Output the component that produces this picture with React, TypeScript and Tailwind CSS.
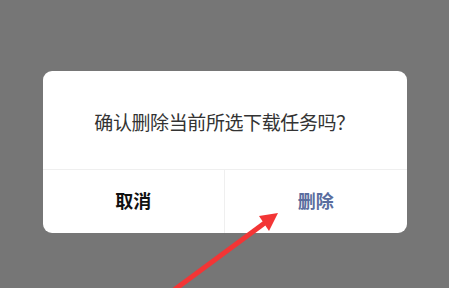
import { FC, ReactElement } from 'react';

const font = { fontFamily: '"Noto Sans CJK SC", "Noto Sans", sans-serif' };

const App: FC = (): ReactElement => {
  return (
    <div className="relative h-[288px] w-full overflow-hidden bg-[#767676]" style={font}>
      <div className="mx-auto flex w-[364px] flex-col pt-[71px]">
        <div className="overflow-hidden rounded-[9px] bg-white">
          <div className="flex h-[98px] items-center justify-center pt-[4px] text-[19px] tracking-[-0.4px] text-[#333333]">
            确认删除当前所选下载任务吗？
          </div>
          <div className="flex h-[64px] border-t border-[#efefef]">
            <div className="flex flex-1 items-center justify-center pb-[2px] text-[18px] font-bold text-[#111111]">
              取消
            </div>
            <div className="flex flex-1 items-center justify-center border-l border-[#efefef] pb-[2px] text-[18px] font-bold text-[#5a6d9e]">
              删除
            </div>
          </div>
        </div>
      </div>
      <svg className="absolute left-0 top-0" width="449" height="288" viewBox="0 0 449 288">
        <line x1="174" y1="290" x2="266" y2="222" stroke="#f33535" strokeWidth="5" />
        <polygon points="278,213 259,216 269,231" fill="#f33535" />
      </svg>
    </div>
  );
};

export default App;
